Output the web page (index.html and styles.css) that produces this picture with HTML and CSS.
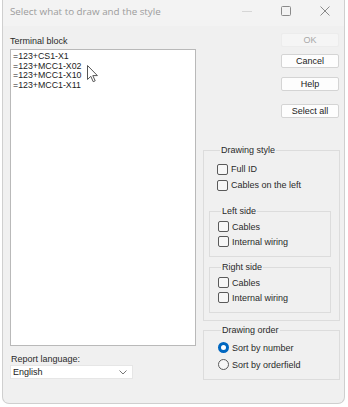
FILE: index.html
```html
<!DOCTYPE html>
<html lang="en">
<head>
    <meta charset="UTF-8">
    <meta name="viewport" content="width=device-width, initial-scale=1.0">
    <title>Select what to draw and the style</title>
    <link rel="stylesheet" href="styles.css">
</head>
<body>
    <div class="window">
        <div class="titlebar">
            <span class="title">Select what to draw and the style</span>
            <div class="controls">
                <svg class="ctl" width="12" height="12" viewBox="0 0 12 12"><path d="M1 6.5h10" stroke="#d6d6d6" stroke-width="1"/></svg>
                <svg class="ctl" width="12" height="12" viewBox="0 0 12 12"><rect x="1.5" y="1.5" width="9" height="9" rx="1" fill="none" stroke="#8a8a8a" stroke-width="1"/></svg>
                <svg class="ctl" width="12" height="12" viewBox="0 0 12 12"><path d="M1.5 1.5l9 9M10.5 1.5l-9 9" stroke="#8a8a8a" stroke-width="1"/></svg>
            </div>
        </div>
        <div class="content">
            <div class="left">
                <div class="label">Terminal block</div>
                <div class="listbox">
                    <div class="item">=123+CS1-X1</div>
                    <div class="item">=123+MCC1-X02</div>
                    <div class="item">=123+MCC1-X10</div>
                    <div class="item">=123+MCC1-X11</div>
                    <svg class="cursor" width="12" height="18" viewBox="0 0 12 18">
                        <path d="M0.5 0.5v14l3.3-3.2 2.4 5.4 2-0.9-2.4-5.2h4.6z" fill="#fff" stroke="#555" stroke-width="1" stroke-linejoin="round"/>
                    </svg>
                </div>
                <div class="label lang">Report language:</div>
                <div class="select">
                    <span>English</span>
                    <svg width="8" height="5" viewBox="0 0 8 5"><path d="M0.5 0.5l3.5 3.5 3.5-3.5" fill="none" stroke="#777" stroke-width="1"/></svg>
                </div>
            </div>
            <div class="right">
                <button class="btn" disabled>OK</button>
                <button class="btn cancel">Cancel</button>
                <button class="btn help">Help</button>
                <button class="btn selall">Select all</button>

                <fieldset class="group style">
                    <legend>Drawing style</legend>
                    <label class="check first"><span class="box"></span>Full ID</label>
                    <label class="check"><span class="box"></span>Cables on the left</label>
                    <fieldset class="group inner">
                        <legend>Left side</legend>
                        <label class="check"><span class="box"></span>Cables</label>
                        <label class="check"><span class="box"></span>Internal wiring</label>
                    </fieldset>
                    <fieldset class="group inner second">
                        <legend>Right side</legend>
                        <label class="check"><span class="box"></span>Cables</label>
                        <label class="check"><span class="box"></span>Internal wiring</label>
                    </fieldset>
                </fieldset>

                <fieldset class="group order">
                    <legend>Drawing order</legend>
                    <label class="radio"><span class="dot on"></span>Sort by number</label>
                    <label class="radio"><span class="dot"></span>Sort by orderfield</label>
                </fieldset>
            </div>
        </div>
    </div>
</body>
</html>
```

FILE: styles.css
```css
body {
    margin: 0;
    background: #fff;
    font-family: "Liberation Sans", Arial, sans-serif;
    font-size: 9px;
    color: #2a2a2a;
}
.window {
    margin-left: 2px;
    width: 341px;
    height: 403px;
    background: #f0f0f0;
    border: 1px solid #cfcfcf;
    border-top: none;
    border-radius: 0 0 7px 7px;
    overflow: hidden;
}
.titlebar {
    height: 26px;
    display: flex;
    align-items: center;
    justify-content: space-between;
    background: #f3f3f3;
    padding: 0 0 4px 7px;
    box-sizing: border-box;
}
.title {
    font-family: "Open Sans", sans-serif;
    font-size: 9.8px;
    color: #9c9c9c;
}
.controls {
    display: flex;
    gap: 27px;
    padding-right: 13px;
}
.ctl {
    display: block;
}
.content {
    display: flex;
    gap: 7px;
    padding: 7px 4px 0 7px;
}
.left {
    width: 186px;
}
.label {
    height: 12px;
    line-height: 12px;
    margin-top: 2px;
}
.listbox {
    position: relative;
    margin-top: 2px;
    height: 295px;
    background: #fff;
    border: 1px solid #b9b9b9;
    padding: 2px 2px;
    box-sizing: border-box;
    height: 297px;
}
.item {
    height: 9.7px;
    line-height: 9.7px;
    font-size: 8.8px;
    color: #222;
}
.cursor {
    position: absolute;
    left: 76px;
    top: 15px;
}
.lang {
    margin-top: 7px;
    margin-left: 1px;
}
.select {
    height: 14px;
    width: 123px;
    box-sizing: border-box;
    background: #fff;
    border: 1px solid #e6e6e6;
    display: flex;
    align-items: center;
    justify-content: space-between;
    padding: 0 5px 0 2px;
    color: #222;
}
.right {
    width: 137px;
    display: flex;
    flex-direction: column;
    align-items: flex-end;
}
.btn {
    width: 58px;
    height: 14px;
    margin-right: 1px;
    padding: 0;
    font-family: inherit;
    font-size: 9px;
    color: #222;
    background: #fdfdfd;
    border: 1px solid #d4d4d4;
    border-radius: 2px;
}
.btn:disabled {
    background: #f5f5f5;
    border-color: #ececec;
    color: #a8a8a8;
}
.cancel {
    margin-top: 7px;
}
.help {
    margin-top: 9px;
}
.selall {
    margin-top: 13px;
}
.group {
    margin: 0;
    padding: 0;
    min-inline-size: 0;
    border: 1px solid #dcdcdc;
    box-sizing: border-box;
}
.group legend {
    padding: 0 1px;
    margin-left: 3px;
    line-height: 10px;
    height: 10px;
}
.style {
    align-self: stretch;
    margin-top: 27px;
    height: 176px;
    padding: 6px 0 0 13px;
}
.inner {
    margin: 13px 8px 0 -8px;
    height: 51px;
    padding: 3px 0 0 8px;
}
.inner.second {
    margin-top: 5px;
}
.check,
.radio {
    display: flex;
    align-items: center;
    height: 16px;
    gap: 3px;
}
.inner .check {
    height: 15px;
}
.box {
    width: 11px;
    height: 11px;
    box-sizing: border-box;
    border: 1px solid #5a5a5a;
    border-radius: 2px;
    background: #f7f7f7;
}
.order {
    align-self: stretch;
    margin-top: 4px;
    height: 55px;
    padding: 4px 0 0 14px;
}
.order .radio {
    height: 17px;
}
.dot {
    width: 11px;
    height: 11px;
    box-sizing: border-box;
    border: 1px solid #5a5a5a;
    border-radius: 50%;
    background: #f7f7f7;
}
.dot.on {
    border: 3px solid #0067c0;
    background: #fff;
}
```
